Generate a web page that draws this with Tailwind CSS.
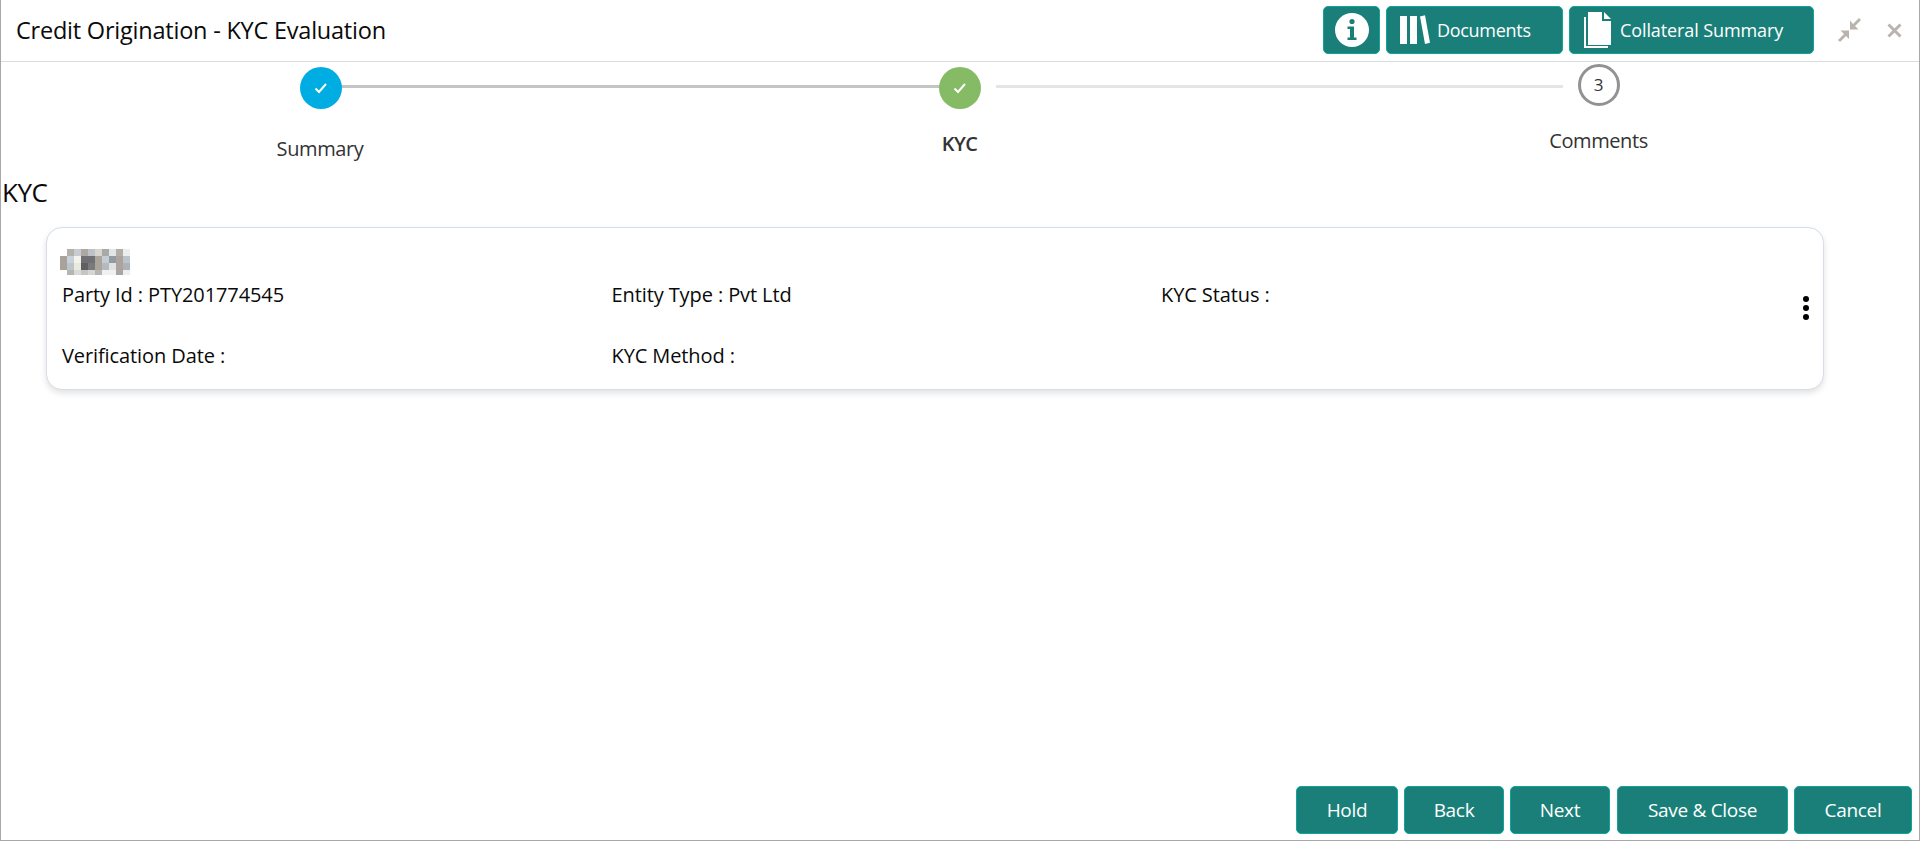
<!DOCTYPE html>
<html lang="en">
<head>
    <meta charset="UTF-8">
    <meta name="viewport" content="width=device-width, initial-scale=1.0">
    <script src="https://cdn.jsdelivr.net/npm/@tailwindcss/browser@4"></script>
    <title>Credit Origination - KYC Evaluation</title>
</head>
<body class="bg-white text-black font-['Open_Sans',sans-serif]">
    <div class="h-[841px] flex flex-col border-x border-b border-[#a8a8a8] overflow-hidden">
        <!-- Header -->
        <header class="h-[62px] shrink-0 flex items-center border-b border-[#dcdcdc] pl-[15px] pb-[1px]">
            <h1 class="text-[23.5px] tracking-[-0.22px] text-[#0a0a0a] pt-[1px]">Credit Origination - KYC Evaluation</h1>
            <div class="ml-auto flex items-center gap-[6px]">
                <button class="w-[57px] h-[48px] rounded-[5px] bg-[#1b7f79] border border-[#0fa59a] flex items-center justify-center">
                    <svg width="34" height="34" viewBox="0 0 34 34">
                        <circle cx="17" cy="17" r="17" fill="#fff"/>
                        <circle cx="17" cy="8.5" r="2.6" fill="#1b7f79"/>
                        <path d="M12.5 13.5h6.500v11h2.500v2.500h-9v-2.500h2.500v-8.500h-2.500z" fill="#1b7f79"/>
                    </svg>
                </button>
                <button class="w-[177px] h-[48px] rounded-[5px] bg-[#1b7f79] border border-[#0fa59a] flex items-center pl-[13px] gap-[7px] text-white text-[18px] tracking-[-0.3px]">
                    <svg width="30" height="30" viewBox="0 0 30 30" class="shrink-0">
                        <path d="M0 1h7v28H0zM10 1h7v28h-7zM20 1.500l5-1.300 5 27.500-5 1.300z" fill="#fff"/>
                    </svg>
                    <span class="pt-[1px]">Documents</span>
                </button>
                <button class="w-[245px] h-[48px] rounded-[5px] bg-[#1b7f79] border border-[#0fa59a] flex items-center pl-[14px] gap-[8px] text-white text-[18px] tracking-[-0.1px]">
                    <svg width="28" height="37" viewBox="0 0 28 37" class="shrink-0">
                        <path d="M0 5h2v29h22v2H0z" fill="#fff"/>
                        <path d="M4 0h14v9h9v24H4z" fill="#fff"/>
                        <path d="M20 0l7 7h-7z" fill="#fff"/>
                    </svg>
                    <span class="pt-[1px]">Collateral Summary</span>
                </button>
                <div class="w-[99px] flex items-center pl-[17px] gap-[25px]">
                    <svg width="25" height="26" viewBox="0 0 25 26" class="shrink-0">
                        <path d="M24 3l-6 6 3.500 3.500H13V3.500L16 7l6-6zM1 23l6-6-3.500-3.500H12v8.500L9 19l-6 6z" fill="#b9b5ae"/>
                    </svg>
                    <svg width="15" height="15" viewBox="0 0 15 15" class="shrink-0">
                        <path d="M1.500 1.500l12 12M13.500 1.500l-12 12" stroke="#b9b5ae" stroke-width="3" fill="none"/>
                    </svg>
                </div>
            </div>
        </header>

        <!-- Stepper -->
        <div class="h-[124px] shrink-0 flex">
            <div class="w-[639px] shrink-0 flex flex-col items-center">
                <div class="w-full relative h-[42px] mt-[5px]">
                    <div class="absolute left-[339px] right-0 top-[18px] h-[3px] bg-[#c4c4c4]"></div>
                    <div class="absolute left-[299px] top-0 w-[42px] h-[42px] rounded-full bg-[#00ade2] flex items-center justify-center">
                        <svg width="14" height="12" viewBox="0 0 14 12"><path d="M1.500 6.500l3.500 3.500 7-8" stroke="#fff" stroke-width="2" fill="none"/></svg>
                    </div>
                </div>
                <div class="mt-[25px] text-[20px] tracking-[-0.4px] text-[#333] pr-[1px]">Summary</div>
            </div>
            <div class="w-[638px] shrink-0 flex flex-col items-center">
                <div class="w-full relative h-[42px] mt-[5px]">
                    <div class="absolute left-0 w-[300px] top-[18px] h-[3px] bg-[#c4c4c4]"></div>
                    <div class="absolute left-[356px] right-[-285px] top-[18px] h-[3px] bg-[#e5e5e5]"></div>
                    <div class="absolute left-[299px] top-0 w-[42px] h-[42px] rounded-full bg-[#85bb65] flex items-center justify-center">
                        <svg width="14" height="12" viewBox="0 0 14 12"><path d="M1.500 6.500l3.500 3.500 7-8" stroke="#fff" stroke-width="2" fill="none"/></svg>
                    </div>
                </div>
                <div class="mt-[20px] text-[20px] font-semibold tracking-[-0.6px] text-[#333] ml-[1px]">KYC</div>
            </div>
            <div class="flex-1 flex flex-col items-center">
                <div class="w-[42px] h-[42px] mt-[2px] rounded-full border-[3px] border-[#929292] flex items-center justify-center text-[17px] text-[#333] tracking-[-0.4px]">3</div>
                <div class="mt-[20px] text-[20px] tracking-[-0.4px] text-[#333]">Comments</div>
            </div>
        </div>

        <h2 class="mt-[-10px] text-[26px] leading-[32px] tracking-[-0.5px] text-[#0a0a0a] ml-[1px]">KYC</h2>

        <!-- Party card -->
        <div class="ml-[45px] mt-[19px] w-[1778px] h-[163px] shrink-0 rounded-[16px] border border-[#d6dfe6] shadow-[0_3px_6px_rgba(0,0,0,0.12)] flex pl-[15px] pr-[14px] bg-white">
            <div class="flex-1 flex flex-col">
                <svg width="70" height="26" viewBox="0 0 70 26" class="mt-[21px] ml-[-2px] shrink-0" shape-rendering="crispEdges">
                    <rect x="7" y="0" width="7" height="7" fill="#b3b1ac"/><rect x="14" y="0" width="7" height="7" fill="#c6ccd2"/><rect x="21" y="0" width="7" height="7" fill="#aba7a2"/><rect x="28" y="0" width="7" height="7" fill="#bcc2c7"/><rect x="35" y="0" width="7" height="7" fill="#d8d5cd"/><rect x="42" y="0" width="7" height="7" fill="#a9a9a9"/><rect x="49" y="0" width="7" height="7" fill="#e3e4e4"/><rect x="56" y="0" width="7" height="7" fill="#b1aeaa"/><rect x="63" y="0" width="7" height="7" fill="#eceeee"/>
                    <rect x="0" y="7" width="7" height="14" fill="#a9a298"/><rect x="7" y="7" width="7" height="7" fill="#c8d0d8"/><rect x="14" y="7" width="7" height="7" fill="#f2f4ec"/><rect x="21" y="7" width="14" height="7" fill="#6f6f74"/><rect x="35" y="7" width="7" height="14" fill="#aaa49a"/><rect x="42" y="7" width="7" height="7" fill="#c6cdd2"/><rect x="49" y="7" width="7" height="7" fill="#929aa4"/><rect x="56" y="7" width="7" height="14" fill="#aca49c"/><rect x="63" y="7" width="7" height="7" fill="#bcc3ca"/>
                    <rect x="7" y="14" width="7" height="7" fill="#bcc4cc"/><rect x="14" y="14" width="7" height="7" fill="#e8eade"/><rect x="21" y="14" width="7" height="7" fill="#5f5f62"/><rect x="28" y="14" width="7" height="7" fill="#787a7e"/><rect x="42" y="14" width="7" height="7" fill="#b4bac0"/><rect x="49" y="14" width="7" height="7" fill="#dfe1e3"/><rect x="63" y="14" width="7" height="7" fill="#aeb3b8"/>
                    <rect x="7" y="21" width="7" height="5" fill="#b9b4ac"/><rect x="14" y="21" width="7" height="5" fill="#d6dadc"/><rect x="21" y="21" width="7" height="5" fill="#c5c5c3"/><rect x="28" y="21" width="7" height="5" fill="#d8d6ce"/><rect x="35" y="21" width="7" height="5" fill="#b8b6b2"/><rect x="42" y="21" width="7" height="5" fill="#eff1f1"/><rect x="49" y="21" width="7" height="5" fill="#f0f1f1"/><rect x="56" y="21" width="7" height="5" fill="#a8a6a4"/><rect x="63" y="21" width="7" height="5" fill="#eeeeee"/>
                </svg>
                <div class="grid grid-cols-[549.5px_549.5px_1fr] text-[20px] tracking-[-0.1px] text-[#0a0a0a] leading-[26px] mt-[7px]">
                    <div class="h-[61px]">Party Id : PTY201774545</div>
                    <div>Entity Type : Pvt Ltd</div>
                    <div>KYC Status :</div>
                    <div>Verification Date :</div>
                    <div>KYC Method :</div>
                </div>
            </div>
            <div class="flex flex-col gap-[3px] self-center mb-[1px]">
                <span class="w-[6px] h-[6px] rounded-full bg-black"></span>
                <span class="w-[6px] h-[6px] rounded-full bg-black"></span>
                <span class="w-[6px] h-[6px] rounded-full bg-black"></span>
            </div>
        </div>

        <!-- Footer buttons -->
        <footer class="mt-auto mb-[6px] mr-[7px] flex justify-end gap-[6px] text-white text-[19px] tracking-[-0.3px]">
            <button class="w-[102px] h-[48px] rounded-[5px] bg-[#1b7f79] border border-[#0fa59a]">Hold</button>
            <button class="w-[100px] h-[48px] rounded-[5px] bg-[#1b7f79] border border-[#0fa59a]">Back</button>
            <button class="w-[100px] h-[48px] rounded-[5px] bg-[#1b7f79] border border-[#0fa59a]">Next</button>
            <button class="w-[171px] ml-[1px] h-[48px] rounded-[5px] bg-[#1b7f79] border border-[#0fa59a]">Save &amp; Close</button>
            <button class="w-[118px] h-[48px] rounded-[5px] bg-[#1b7f79] border border-[#0fa59a]">Cancel</button>
        </footer>
    </div>
</body>
</html>
